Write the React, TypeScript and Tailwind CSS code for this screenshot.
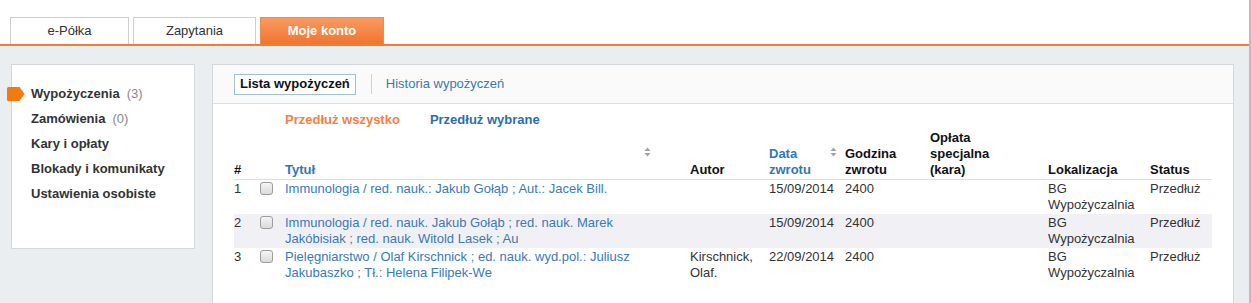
import React from 'react';

const rows = [
  {
    n: 1,
    title: 'Immunologia / red. nauk.: Jakub Gołąb ; Aut.: Jacek Bill.',
    author: '',
    date: '15/09/2014',
    alt: false,
  },
  {
    n: 2,
    title: 'Immunologia / red. nauk. Jakub Gołąb ; red. nauk. Marek Jakóbisiak ; red. nauk. Witold Lasek ; Au',
    author: '',
    date: '15/09/2014',
    alt: true,
  },
  {
    n: 3,
    title: 'Pielęgniarstwo / Olaf Kirschnick ; ed. nauk. wyd.pol.: Juliusz Jakubaszko ; Tł.: Helena Filipek-We',
    author: 'Kirschnick, Olaf.',
    date: '22/09/2014',
    alt: false,
  },
];

function SortIcon() {
  return (
    <svg width="7" height="10" viewBox="0 0 7 10" className="block">
      <path d="M3.5 0.5 L6.5 4 L0.5 4 Z" fill="#a3a3a3" />
      <path d="M3.5 9.5 L6.5 6 L0.5 6 Z" fill="#a3a3a3" />
    </svg>
  );
}

function Checkbox() {
  return (
    <span className="mt-[1px] block h-[13px] w-[13px] rounded-[3px] border border-[#9d9d9d] bg-gradient-to-b from-[#f5f5f5] to-[#dadada]" />
  );
}

const sideItems = [
  { label: 'Wypożyczenia', count: '(3)', active: true },
  { label: 'Zamówienia', count: '(0)' },
  { label: 'Kary i opłaty' },
  { label: 'Blokady i komunikaty' },
  { label: 'Ustawienia osobiste' },
];

export default function App() {
  return (
    <div className="flex h-[303px] w-[1251px] overflow-hidden font-['Liberation_Sans',Arial,sans-serif] text-[#333]">
      <div className="flex w-[1249px] flex-col">
        {/* tabs */}
        <div className="flex h-[46px] shrink-0 items-end gap-[4px] border-b-2 border-[#f27c34] bg-white pl-[10px]">
          <div className="flex h-[27px] w-[119px] items-center justify-center border border-b-0 border-[#cfcfcf] text-[13px]">
            e-Półka
          </div>
          <div className="flex h-[27px] w-[123px] items-center justify-center border border-b-0 border-[#cfcfcf] text-[13px]">
            Zapytania
          </div>
          <div className="flex h-[27px] w-[124px] items-center justify-center border border-b-0 border-[#f08a4c] bg-gradient-to-b from-[#fa9a5f] to-[#f0742f] text-[13px] font-bold text-white">
            Moje konto
          </div>
        </div>

        <div className="flex flex-1 items-start gap-[17px] bg-[#ebeef1] pl-[11px] pr-[17px] pt-[18px]">
          {/* sidebar */}
          <div className="relative h-[185px] w-[184px] shrink-0 border border-[#d3d8dd] bg-white pl-[19px] pt-[16px]">
            {sideItems.map((it) => (
              <div key={it.label} className="relative text-[13px] leading-[25px] font-bold text-[#333]">
                {it.active && (
                  <svg width="18" height="14" viewBox="0 0 18 14" className="absolute left-[-24px] top-[6px]">
                    <path d="M1.5 0 H12.5 L17.5 7 L12.5 14 H1.5 Q0 14 0 12.5 V1.5 Q0 0 1.5 0 Z" fill="#f27a0e" />
                  </svg>
                )}
                {it.label}
                {it.count && <span className="ml-[7px] font-normal text-[#888]">{it.count}</span>}
              </div>
            ))}
          </div>

          {/* main panel */}
          <div className="h-[300px] flex-1 border border-[#d3d8dd] bg-white">
            <div className="flex h-[39px] items-center border-b border-[#dcdfe2] bg-[#fafafa] px-[21px]">
              <div className="flex h-[21px] items-center border border-[#a3bfd3] bg-white px-[5px] text-[13px] font-bold text-[#111]">
                Lista wypożyczeń
              </div>
              <div className="ml-[15px] h-[20px] w-px bg-[#d0d0d0]" />
              <div className="ml-[14px] text-[13px] text-[#3c78b0]">Historia wypożyczeń</div>
            </div>

            <div className="px-[21px]">
              <div className="mt-[8px] flex gap-[30px] pl-[51px] text-[13px] leading-[16px] font-bold">
                <span className="text-[#f57f45]">Przedłuż wszystko</span>
                <span className="text-[#2b6fa9]">Przedłuż wybrane</span>
              </div>

              <table className="mt-[2px] w-[978px] table-fixed border-collapse text-[13px] leading-[16px]">
                <colgroup>
                  <col className="w-[24px]" />
                  <col className="w-[27px]" />
                  <col className="w-[405px]" />
                  <col className="w-[79px]" />
                  <col className="w-[76px]" />
                  <col className="w-[85px]" />
                  <col className="w-[118px]" />
                  <col className="w-[102px]" />
                  <col className="w-[62px]" />
                </colgroup>
                <thead>
                  <tr className="border-b border-[#dedede] text-left align-bottom text-[13px] font-bold text-[#111]">
                    <th className="pb-[1px]">#</th>
                    <th />
                    <th className="relative pb-[1px] text-[#2f78b6]">
                      Tytuł
                      <span className="absolute right-[39px] top-[17px]"><SortIcon /></span>
                    </th>
                    <th className="pb-[1px]">Autor</th>
                    <th className="relative pb-[1px] font-normal text-[#2f78b6]">
                      <span className="font-bold">Data<br />zwrotu</span>
                      <span className="absolute right-[8px] top-[17px]"><SortIcon /></span>
                    </th>
                    <th className="pb-[1px]">Godzina<br />zwrotu</th>
                    <th className="pb-[1px]">Opłata<br />specjalna<br />(kara)</th>
                    <th className="pb-[1px]">Lokalizacja</th>
                    <th className="pb-[1px]">Status</th>
                  </tr>
                </thead>
                <tbody>
                  {rows.map((r) => (
                    <tr key={r.n} className={`h-[34px] align-top ${r.alt ? 'bg-[#f1f1f5]' : 'bg-white'}`}>
                      <td className="pt-[1px]">{r.n}</td>
                      <td className="pt-[1px] pl-[2px]"><Checkbox /></td>
                      <td className="pt-[1px] pr-[18px] text-[#3a7ab8]">{r.title}</td>
                      <td className="pt-[1px] pr-[4px]">{r.author}</td>
                      <td className="pt-[1px]">{r.date}</td>
                      <td className="pt-[1px]">2400</td>
                      <td className="pt-[1px]" />
                      <td className="pt-[1px]">BG<br />Wypożyczalnia</td>
                      <td className="pt-[1px]">Przedłuż</td>
                    </tr>
                  ))}
                </tbody>
              </table>
            </div>
          </div>
        </div>
      </div>
      <div className="w-[2px] bg-[#b9bdc1]" />
    </div>
  );
}
